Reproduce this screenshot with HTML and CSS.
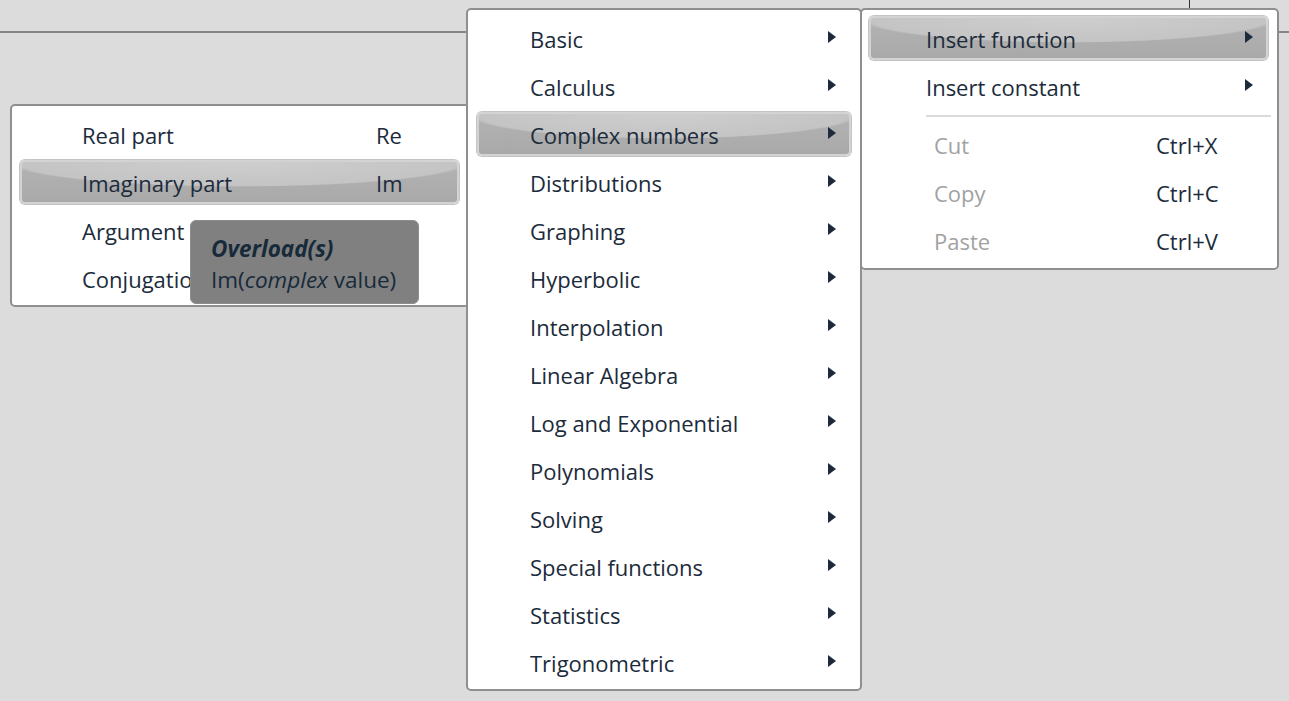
FILE: index.html
```html
<!DOCTYPE html>
<html>
<head>
<meta charset="utf-8">
<link rel="stylesheet" href="styles.css">
</head>
<body>
<div class="canvas">
  <div class="topline"></div>
  <div class="vtick"></div>

  <div class="menu menu-left">
    <div class="item"><span class="label">Real part</span><span class="key">Re</span></div>
    <div class="item hl"><span class="label">Imaginary part</span><span class="key">Im</span></div>
    <div class="item"><span class="label">Argument</span><span class="key"></span></div>
    <div class="item"><span class="label">Conjugation</span><span class="key"></span></div>
  </div>

  <div class="menu menu-mid">
    <div class="item sub"><span class="label">Basic</span><span class="arrow"></span></div>
    <div class="item sub"><span class="label">Calculus</span><span class="arrow"></span></div>
    <div class="item sub hl"><span class="label">Complex numbers</span><span class="arrow"></span></div>
    <div class="item sub"><span class="label">Distributions</span><span class="arrow"></span></div>
    <div class="item sub"><span class="label">Graphing</span><span class="arrow"></span></div>
    <div class="item sub"><span class="label">Hyperbolic</span><span class="arrow"></span></div>
    <div class="item sub"><span class="label">Interpolation</span><span class="arrow"></span></div>
    <div class="item sub"><span class="label">Linear Algebra</span><span class="arrow"></span></div>
    <div class="item sub"><span class="label">Log and Exponential</span><span class="arrow"></span></div>
    <div class="item sub"><span class="label">Polynomials</span><span class="arrow"></span></div>
    <div class="item sub"><span class="label">Solving</span><span class="arrow"></span></div>
    <div class="item sub"><span class="label">Special functions</span><span class="arrow"></span></div>
    <div class="item sub"><span class="label">Statistics</span><span class="arrow"></span></div>
    <div class="item sub"><span class="label">Trigonometric</span><span class="arrow"></span></div>
  </div>

  <div class="menu menu-right">
    <div class="item sub hl"><span class="label">Insert function</span><span class="arrow"></span></div>
    <div class="item sub"><span class="label">Insert constant</span><span class="arrow"></span></div>
    <div class="sep"></div>
    <div class="item dis"><span class="label">Cut</span><span class="key">Ctrl+X</span></div>
    <div class="item dis"><span class="label">Copy</span><span class="key">Ctrl+C</span></div>
    <div class="item dis"><span class="label">Paste</span><span class="key">Ctrl+V</span></div>
  </div>

  <div class="tooltip">
    <div class="tt-title">Overload(s)</div>
    <div class="tt-sig">Im(<i>complex</i> value)</div>
  </div>
</div>
</body>
</html>
```

FILE: styles.css
```css
html, body {
  margin: 0;
  padding: 0;
}
body {
  background: #dcdcdc;
  font-family: "Open Sans", "Noto Sans", sans-serif;
  color: #1b2b3b;
}
.canvas {
  position: relative;
  width: 1289px;
  height: 701px;
  overflow: hidden;
}
.topline {
  position: absolute;
  left: 0;
  right: 0;
  top: 31px;
  height: 2px;
  background: #858585;
}
.vtick {
  position: absolute;
  left: 1189px;
  top: 0;
  width: 1px;
  height: 9px;
  background: #303030;
}
.menu {
  position: absolute;
  box-sizing: border-box;
  background: #ffffff;
  border: 2px solid #8f8f8f;
  border-radius: 5px;
  padding-top: 6px;
  display: flex;
  flex-direction: column;
}
.menu-left {
  left: 10px;
  top: 104px;
  width: 460px;
  height: 203px;
}
.menu-mid {
  left: 466px;
  top: 8px;
  width: 396px;
  height: 683px;
}
.menu-right {
  left: 860px;
  top: 8px;
  width: 419px;
  height: 262px;
}
.item {
  box-sizing: border-box;
  height: 44px;
  margin: 0 9px 4px 9px;
  border: 2px solid transparent;
  border-radius: 5px;
  display: flex;
  align-items: center;
  padding-top: 2px;
  font-size: 22px;
  white-space: nowrap;
}
.menu-left .item { margin-left: 8px; padding-left: 60px; }
.menu-mid .item { padding-left: 51px; }
.menu-right .item { margin-left: 7px; padding-left: 55px; }
.menu-right .item.dis { padding-left: 63px; }

.menu-left .label { width: 294px; }
.menu-right .dis .label { width: 222px; }
.sub .label { flex: 1; }
.arrow {
  width: 0;
  height: 0;
  border-top: 6px solid transparent;
  border-bottom: 6px solid transparent;
  border-left: 8px solid #1b2b3b;
  margin-right: 13px;
  margin-top: -5px;
}
.dis .label { color: #a2a2a2; }
.dis .key { color: #1b2b3b; }

.hl {
  border-color: #d3d3d3;
  box-shadow: 0 0 0 1px #c4c4c4;
  background:
    radial-gradient(ellipse 53% 62% at 50% 0%, #cecece 0%, #c4c4c4 96%, rgba(196,196,196,0) 100%),
    linear-gradient(#b3b3b3, #a9a9a9);
}

.sep {
  height: 2px;
  background: #dadada;
  margin: 3px 6px 5px 64px;
}

.tooltip {
  position: absolute;
  left: 190px;
  top: 220px;
  width: 229px;
  height: 84px;
  box-sizing: border-box;
  background: #808080;
  border: 1px solid #8d8d8d;
  border-radius: 6px;
  padding: 12px 0 0 20px;
  font-size: 22.5px;
  color: #172a3a;
  line-height: 31px;
}
.tt-title {
  font-weight: bold;
  font-style: italic;
}
```
